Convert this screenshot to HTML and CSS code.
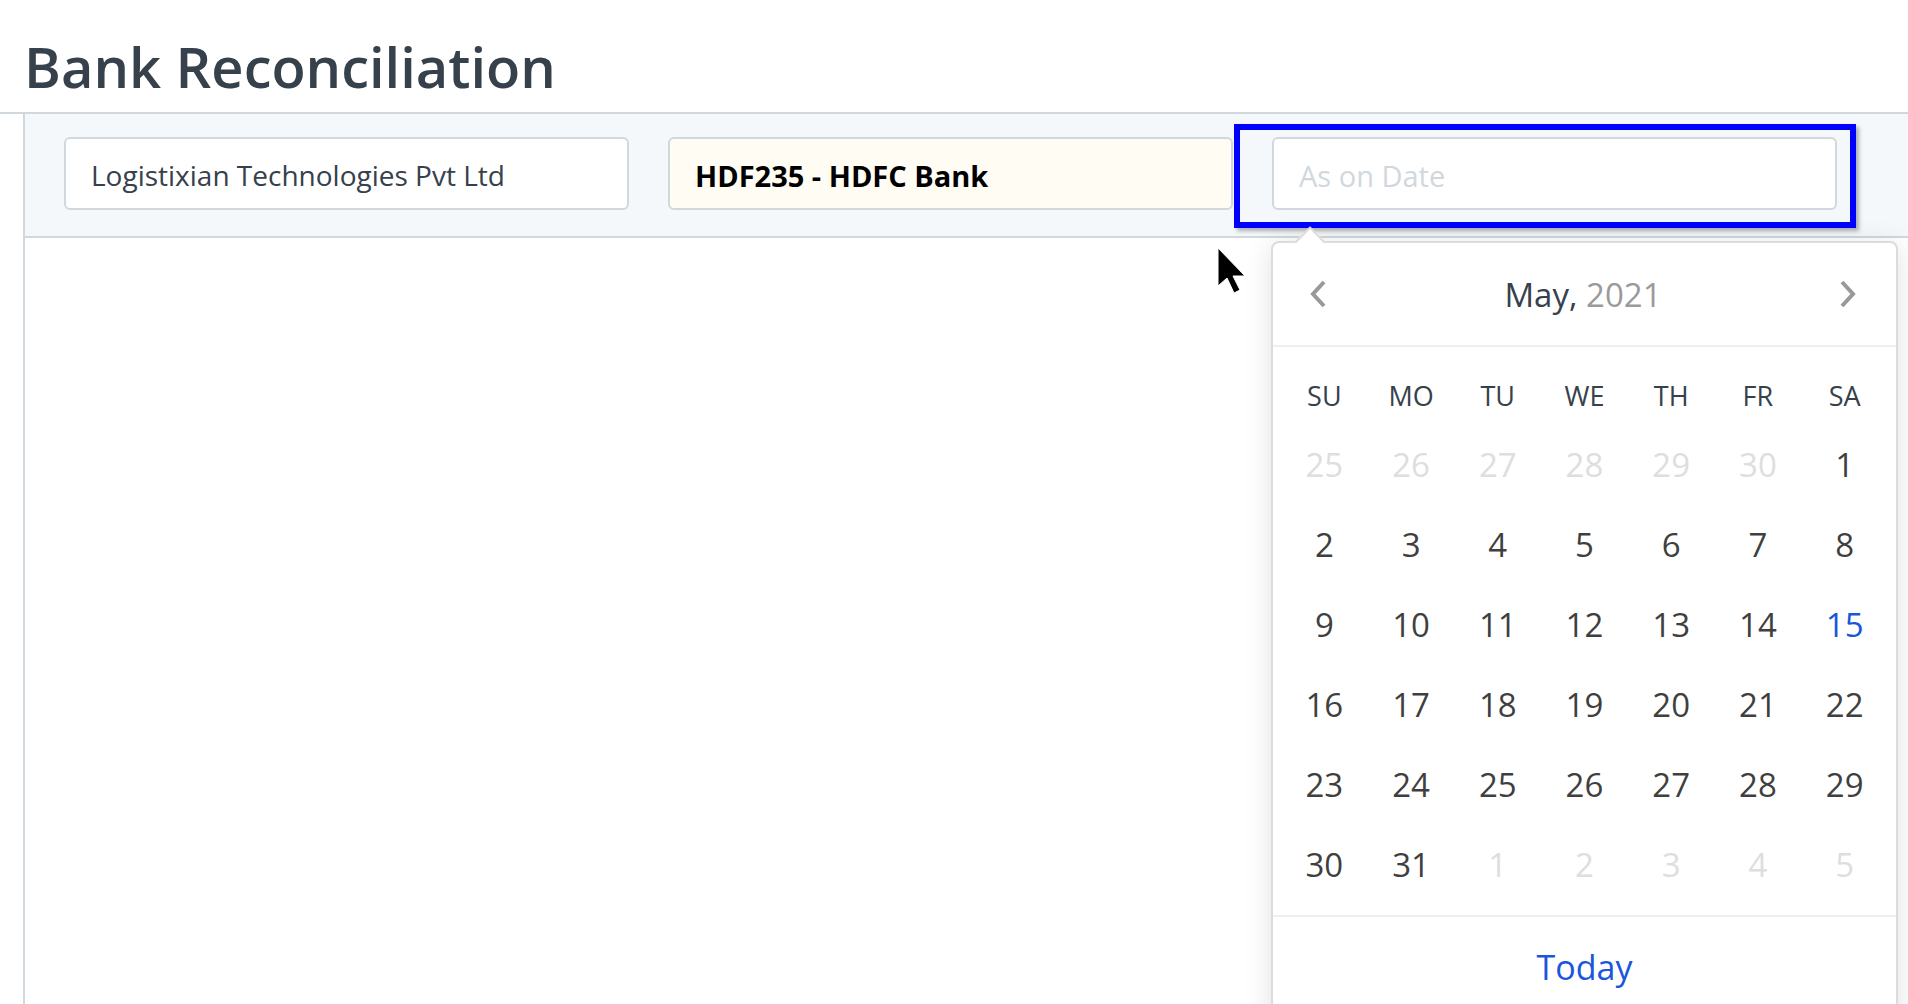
FILE: index.html
```html
<!DOCTYPE html>
<html lang="en">
<head>
  <meta charset="UTF-8" />
  <title>Bank Reconciliation</title>
  <link rel="stylesheet" href="styles.css">
</head>
<body>

<div class="page-head">
  <h1 class="page-title">Bank Reconciliation</h1>
</div>

<div class="page-body">
  <div class="page-form">
    <div class="form-group">
      <input class="form-control" type="text" value="Logistixian Technologies Pvt Ltd">
    </div>
    <div class="form-group">
      <input class="form-control bold" type="text" value="HDF235 - HDFC Bank">
    </div>
    <div class="form-group date-group">
      <input class="form-control date" type="text" placeholder="As on Date">
      <div class="highlight"></div>

      <div class="datepicker">
        <div class="dp-pointer"></div>
        <div class="dp-nav">
          <span class="dp-arrow">
            <svg width="18" height="28" viewBox="0 0 18 28"><path d="M15 2 L4 14 L15 26" fill="none" stroke="#999" stroke-width="4"/></svg>
          </span>
          <span class="dp-title">May, <i>2021</i></span>
          <span class="dp-arrow">
            <svg width="18" height="28" viewBox="0 0 18 28"><path d="M3 2 L14 14 L3 26" fill="none" stroke="#999" stroke-width="4"/></svg>
          </span>
        </div>
        <div class="dp-body">
          <div class="dp-names">
            <span>SU</span><span>MO</span><span>TU</span><span>WE</span><span>TH</span><span>FR</span><span>SA</span>
          </div>
          <div class="dp-cells" id="cells"></div>
        </div>
        <div class="dp-footer">
          <span class="dp-today">Today</span>
        </div>
      </div>
    </div>
  </div>
</div>

<svg class="mouse" width="30" height="48" viewBox="0 0 30 48">
  <polygon points="1,1 1,39 10,31 17,46 23,43 16,29 28,29" fill="#000" stroke="#fff" stroke-width="1"/>
</svg>

<script>
  // May 2021: starts on Saturday
  const cells = document.getElementById("cells");
  const days = [];
  for (let d = 25; d <= 30; d++) days.push({ n: d, other: true });
  for (let d = 1; d <= 31; d++) days.push({ n: d });
  for (let d = 1; d <= 5; d++) days.push({ n: d, other: true });

  days.forEach(day => {
    const el = document.createElement("span");
    el.className = "dp-cell";
    if (day.other) el.classList.add("other");
    if (!day.other && day.n === 15) el.classList.add("current");
    el.textContent = day.n;
    cells.appendChild(el);
  });
</script>

</body>
</html>
```

FILE: styles.css
```css
body {
  margin: 0;
  font-family: "Open Sans", "Noto Sans", sans-serif;
  color: #36414c;
  background: #fff;
  overflow: hidden;
  height: 1004px;
}
.page-head {
  height: 114px;
  border-bottom: 2px solid #d1d8dd;
  padding: 38px 0 0 24px;
  box-sizing: border-box;
}
.page-title {
  margin: 0;
  font-size: 56px;
  font-weight: 600;
  line-height: 56px;
  color: #36414c;
}
.page-body {
  margin-left: 23px;
  border-left: 2px solid #d1d8dd;
  height: 900px;
}
.page-form {
  display: grid;
  grid-template-columns: repeat(3, 565px);
  column-gap: 39px;
  padding: 23px 39px 26px;
  background: #f5f8fb;
  border-bottom: 2px solid #d1d8dd;
}
.form-group {
  position: relative;
}
.form-control {
  display: block;
  box-sizing: border-box;
  width: 100%;
  height: 73px;
  padding: 3px 25px 0;
  border: 2px solid #d1d8dd;
  border-radius: 6px;
  background: #fff;
  font-family: inherit;
  font-size: 28px;
  color: #36414c;
  outline: none;
}
.form-control.bold {
  background: #fffcf4;
  font-size: 29px;
  font-weight: 700;
  color: #000;
}
.form-control.date {
  font-size: 29px;
}
.form-control::placeholder {
  color: #d1d8dd;
}
.highlight {
  position: absolute;
  left: -38px;
  top: -13px;
  right: -19px;
  bottom: -18px;
  border: 6px solid #0000ff;
  box-shadow: 3px 3px 4px rgba(0,0,0,0.3);
  pointer-events: none;
}

/* datepicker */
.datepicker {
  position: absolute;
  left: -1px;
  top: 104px;
  width: 627px;
  box-sizing: border-box;
  background: #fff;
  border: 2px solid #dcdcdc;
  border-radius: 8px;
  box-shadow: 0 4px 28px rgba(0,0,0,0.12);
  z-index: 10;
}
.dp-pointer {
  position: absolute;
  left: 26px;
  top: -12px;
  width: 20px;
  height: 20px;
  background: #fff;
  border-top: 2px solid #dcdcdc;
  border-left: 2px solid #dcdcdc;
  transform: rotate(45deg);
}
.dp-nav {
  position: relative;
  height: 102px;
  display: flex;
  align-items: center;
  justify-content: space-between;
  padding: 0 39px 0 36px;
  border-bottom: 2px solid #efefef;
}
.dp-arrow {
  display: flex;
}
.dp-title {
  font-size: 33px;
  color: #36414c;
}
.dp-title i {
  font-style: normal;
  color: #9a9a9a;
}
.dp-body {
  padding: 20px 8px 10px;
}
.dp-names,
.dp-cells {
  display: grid;
  grid-template-columns: repeat(7, 1fr);
  text-align: center;
}
.dp-names span {
  height: 58px;
  line-height: 58px;
  font-size: 27px;
  color: #36414c;
}
.dp-cell {
  height: 80px;
  line-height: 80px;
  font-size: 33px;
  color: #3f3f3f;
}
.dp-cell.other {
  color: #dedede;
}
.dp-cell.current {
  color: #1a56db;
}
.dp-footer {
  border-top: 2px solid #efefef;
  padding-top: 10px;
  height: 120px;
  text-align: center;
}
.dp-today {
  font-size: 34px;
  line-height: 80px;
  color: #1a56db;
}
.mouse {
  position: absolute;
  left: 1217px;
  top: 247px;
  z-index: 20;
}
```
